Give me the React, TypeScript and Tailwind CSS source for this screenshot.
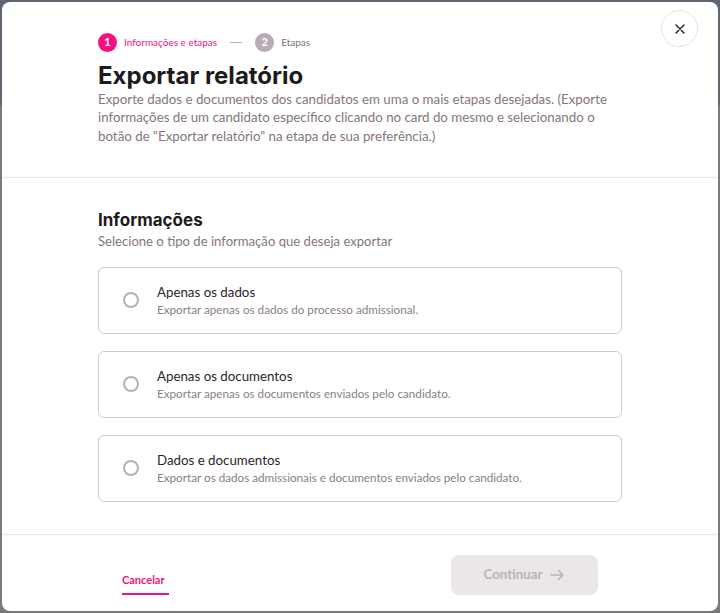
import React from "react";

const options = [
  { title: "Apenas os dados", desc: "Exportar apenas os dados do processo admissional." },
  { title: "Apenas os documentos", desc: "Exportar apenas os documentos enviados pelo candidato." },
  { title: "Dados e documentos", desc: "Exportar os dados admissionais e documentos enviados pelo candidato." },
];

const heading = { fontFamily: "Inter, 'Liberation Sans', sans-serif" };

export default function App() {
  return (
    <div
      className="w-[720px] h-[613px] overflow-hidden bg-[#7a7a7a] relative"
      style={{ fontFamily: "Lato, 'Noto Sans', sans-serif" }}
    >
      <div className="absolute left-0 top-0 w-full h-[105px] bg-[#5e6674]" />
      <div className="absolute left-[2px] top-[2px] w-[716px] h-[609px] bg-white rounded-[8px] flex flex-col">
        <button className="absolute right-[20px] top-[8px] w-[37px] h-[37px] rounded-full border border-[#e6e3e5] bg-white flex items-center justify-center">
          <svg width="10" height="10" viewBox="0 0 10 10" fill="none">
            <path d="M1 1L9 9M9 1L1 9" stroke="#1f1a1d" strokeWidth="1.4" strokeLinecap="round" />
          </svg>
        </button>

        {/* Header */}
        <div className="shrink-0 px-[96px] pt-[30px] pb-[32px]">
          <div className="flex items-center h-[20px]">
            <div className="w-[19px] h-[19px] rounded-full bg-[#f4127f] text-white text-[11px] font-bold flex items-center justify-center">
              1
            </div>
            <span className="ml-[7px] text-[10px] text-[#f4127f]">Informações e etapas</span>
            <div className="ml-[13px] w-[12px] h-px bg-[#b8acb2]" />
            <div className="ml-[13px] w-[19px] h-[19px] rounded-full bg-[#b9abb3] text-white text-[11px] font-bold flex items-center justify-center">
              2
            </div>
            <span className="ml-[7px] text-[10px] text-[#7e6f77]">Etapas</span>
          </div>
          <h1 style={heading} className="mt-[9px] text-[24px] leading-[30px] font-bold text-[#1e1a1c]">
            Exportar relatório
          </h1>
          <p className="mt-[-1px] text-[13.3px] leading-[18.3px] text-[#86757e] w-[524px]">
            Exporte dados e documentos dos candidatos em uma o mais etapas desejadas. (Exporte informações de um
            candidato específico clicando no card do mesmo e selecionando o botão de "Exportar relatório" na etapa de
            sua preferência.)
          </p>
        </div>

        <div className="shrink-0 h-px bg-[#e8e5e7]" />

        {/* Body */}
        <div className="shrink-0 px-[96px] pt-[30px] pb-[32px]">
          <h2 style={heading} className="text-[17px] leading-[24px] font-bold text-[#1e1a1c]">
            Informações
          </h2>
          <p className="text-[13.1px] leading-[18px] text-[#86757e]">Selecione o tipo de informação que deseja exportar</p>
          <div className="mt-[17px] flex flex-col gap-[17px]">
            {options.map((o) => (
              <div
                key={o.title}
                className="h-[67px] border border-[#d3c9ce] rounded-[6px] flex items-center pl-[24px]"
              >
                <div className="w-[16px] h-[16px] rounded-full border-2 border-[#b9aeb4]" />
                <div className="ml-[18px] flex flex-col mt-[-1px]">
                  <span className="text-[13.3px] leading-[18px] text-[#2b2529]">{o.title}</span>
                  <span className="text-[11.7px] leading-[16px] text-[#8b7d85]">{o.desc}</span>
                </div>
              </div>
            ))}
          </div>
        </div>

        <div className="shrink-0 h-px bg-[#e8e5e7]" />

        {/* Footer */}
        <div className="shrink-0 px-[120px] pt-[20px] flex items-start justify-between">
          <button className="flex flex-col items-start pt-[17px]">
            <span className="text-[11px] font-bold text-[#f4127f] leading-[16px]">Cancelar</span>
            <span className="mt-[5px] w-[47px] h-[2px] bg-[#f4127f]" />
          </button>
          <button className="w-[147px] h-[40px] rounded-[8px] bg-[#ebe6e9] flex items-center justify-center gap-[8px]">
            <span className="text-[13.3px] font-bold text-[#bdb1b7]">Continuar</span>
            <svg width="15" height="12" viewBox="0 0 15 12" fill="none">
              <path d="M1 6H13M8.5 1.5L13 6L8.5 10.5" stroke="#bdb1b7" strokeWidth="1.6" strokeLinecap="round" strokeLinejoin="round" />
            </svg>
          </button>
        </div>
      </div>
    </div>
  );
}
